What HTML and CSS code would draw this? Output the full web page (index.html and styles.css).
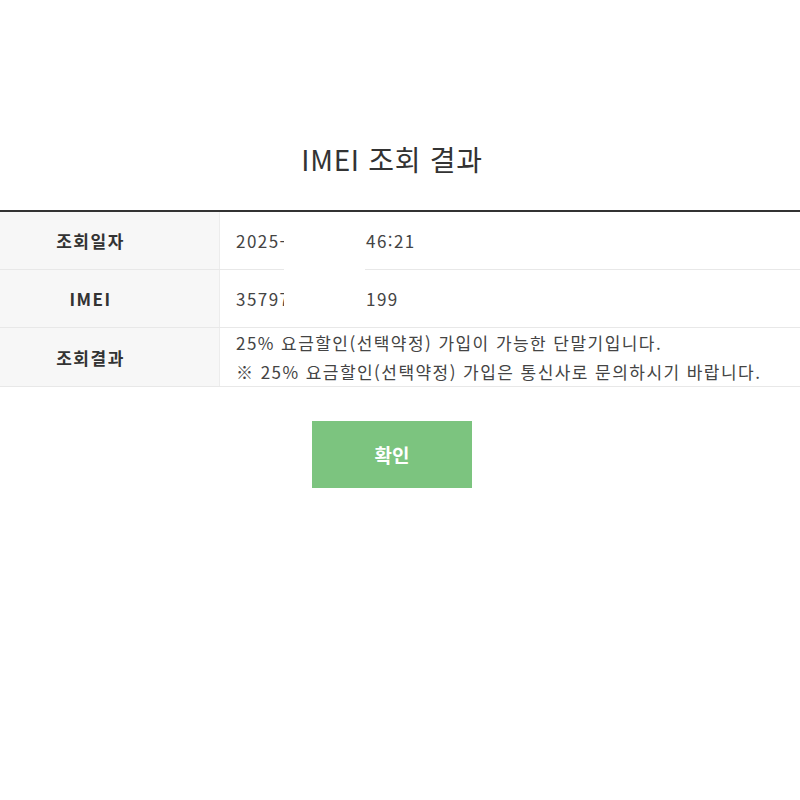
FILE: index.html
```html
<!DOCTYPE html>
<html lang="ko">
<head>
    <meta charset="UTF-8">
    <meta name="viewport" content="width=device-width, initial-scale=1.0">
    <title>IMEI 조회 결과</title>
    <link rel="stylesheet" href="styles.css">
</head>
<body>
    <div class="container">
        <h1 class="title">IMEI 조회 결과</h1>

        <div class="result-table">
            <div class="row">
                <div class="label">조회일자</div>
                <div class="value">
                    <span class="value-head">2025-</span><span>46:21</span>
                </div>
            </div>
            <div class="row">
                <div class="label">IMEI</div>
                <div class="value">
                    <span class="value-head">35797</span><span>199</span>
                </div>
            </div>
            <div class="row">
                <div class="label">조회결과</div>
                <div class="value multi">
                    <p>25% 요금할인(선택약정) 가입이 가능한 단말기입니다.</p>
                    <p>※ 25% 요금할인(선택약정) 가입은 통신사로 문의하시기 바랍니다.</p>
                </div>
            </div>
            <!-- 가림 처리 -->
            <div class="mask"></div>
        </div>

        <div class="actions">
            <a href="#" class="btn-confirm">확인</a>
        </div>
    </div>
</body>
</html>
```

FILE: styles.css
```css
* {
    margin: 0;
    padding: 0;
    box-sizing: border-box;
}

html, body {
    overflow: hidden;
}

body {
    font-family: "Noto Sans CJK KR", "Noto Sans", sans-serif;
    background: #fff;
    color: #333;
    padding-top: 138px;
    height: 800px;
}

.container {
    width: 860px;
    margin-left: -38px;
}

.title {
    font-size: 28px;
    font-weight: 400;
    line-height: 42px;
    letter-spacing: 0.7px;
    text-align: center;
    color: #333;
    margin-bottom: 30px;
}

.result-table {
    position: relative;
    border-top: 2px solid #333;
}

.row {
    display: flex;
    border-bottom: 1px solid #e8e8e8;
}

.label {
    width: 258px;
    min-height: 57px;
    background: #f7f7f7;
    border-right: 1px solid #ececec;
    display: flex;
    align-items: center;
    justify-content: center;
    font-size: 17px;
    font-weight: 700;
    letter-spacing: 1.5px;
    color: #333;
}

.value {
    flex: 1;
    display: flex;
    align-items: center;
    padding-left: 16px;
    font-size: 17px;
    letter-spacing: 1.45px;
    color: #444;
}

.value-head {
    display: inline-block;
    width: 130px;
    white-space: nowrap;
}

.value.multi {
    flex-direction: column;
    align-items: flex-start;
    justify-content: center;
    line-height: 29px;
}

.mask {
    position: absolute;
    left: 322px;
    top: 1px;
    width: 81px;
    height: 104px;
    background: #fff;
}

.actions {
    display: flex;
    justify-content: center;
    margin-top: 34px;
}

.btn-confirm {
    display: flex;
    align-items: center;
    justify-content: center;
    width: 160px;
    height: 67px;
    background: #7cc47f;
    color: #fff;
    font-size: 19px;
    font-weight: 700;
    text-decoration: none;
}
```
